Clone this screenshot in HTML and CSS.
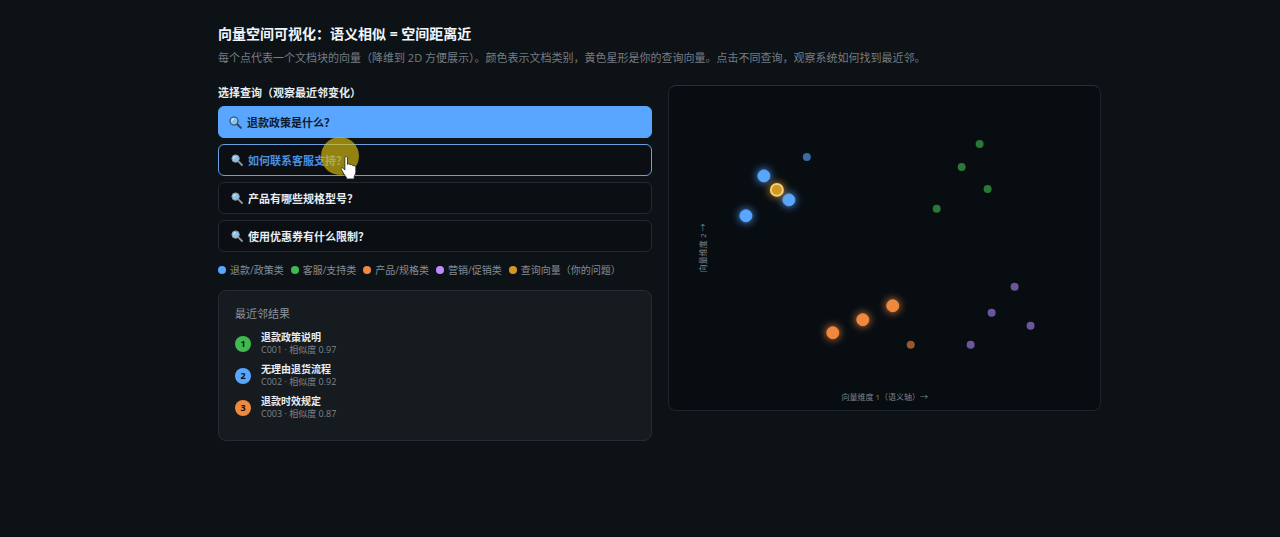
FILE: index.html
```html
<!DOCTYPE html>
<html lang="zh-CN">
<head>
    <meta charset="UTF-8">
    <title>向量空间可视化</title>
    <link rel="stylesheet" href="styles.css">
</head>
<body>
    <svg class="defs" width="0" height="0" aria-hidden="true">
        <symbol id="icon-search" viewBox="0 0 12 12">
            <path d="M7.4 7.4 L11 11" stroke="currentColor" stroke-width="1.8" stroke-linecap="round"/>
            <circle cx="4.6" cy="4.6" r="3.7" fill="#8cc4e8" stroke="currentColor" stroke-width="1"/>
            <path d="M2.6 4.6 A2 2 0 0 1 4.6 2.6" fill="none" stroke="#e8f5fc" stroke-width="1"/>
        </symbol>
    </svg>

    <main class="page">
        <h2 class="title">向量空间可视化：语义相似 = 空间距离近</h2>
        <p class="desc">每个点代表一个文档块的向量（降维到 2D 方便展示）。颜色表示文档类别，黄色星形是你的查询向量。点击不同查询，观察系统如何找到最近邻。</p>

        <div class="columns">
            <section class="left">
                <h3 class="label">选择查询（观察最近邻变化）</h3>
                <div class="queries">
                    <button type="button" class="query active"><svg class="icon"><use href="#icon-search"/></svg>退款政策是什么？</button>
                    <button type="button" class="query hover"><svg class="icon"><use href="#icon-search"/></svg>如何联系客服支持？
                        <span class="pointer">
                            <svg class="hand" viewBox="0 0 16 23">
                                <path d="M4.5 1.5 C4.5 0.2 7 0.2 7 1.5 V8 C7.4 7.2 9.5 7.2 9.7 8.6 C10.3 7.9 12.2 8.2 12.4 9.5 C13 9 15 9.2 15 11 V15 C15 17.5 13.6 18.6 13.4 20 V22 H6 V20.5 C4.6 19 3.6 17.2 2.6 15.4 L1 12.8 C0.4 11.4 2.2 10.8 3 11.8 L4.5 13.5 Z" fill="#fff" stroke="#222" stroke-width="0.8"/>
                            </svg>
                        </span>
                    </button>
                    <button type="button" class="query"><svg class="icon"><use href="#icon-search"/></svg>产品有哪些规格型号？</button>
                    <button type="button" class="query"><svg class="icon"><use href="#icon-search"/></svg>使用优惠券有什么限制？</button>
                </div>

                <div class="legend">
                    <span class="legend-item"><i class="dot blue"></i>退款/政策类</span>
                    <span class="legend-item"><i class="dot green"></i>客服/支持类</span>
                    <span class="legend-item"><i class="dot orange"></i>产品/规格类</span>
                    <span class="legend-item"><i class="dot purple"></i>营销/促销类</span>
                    <span class="legend-item"><i class="dot yellow"></i>查询向量（你的问题）</span>
                </div>

                <div class="results">
                    <h4 class="results-title">最近邻结果</h4>
                    <div class="result">
                        <span class="rank green">1</span>
                        <div>
                            <div class="name">退款政策说明</div>
                            <div class="meta">C001 · 相似度 0.97</div>
                        </div>
                    </div>
                    <div class="result">
                        <span class="rank blue">2</span>
                        <div>
                            <div class="name">无理由退货流程</div>
                            <div class="meta">C002 · 相似度 0.92</div>
                        </div>
                    </div>
                    <div class="result">
                        <span class="rank orange">3</span>
                        <div>
                            <div class="name">退款时效规定</div>
                            <div class="meta">C003 · 相似度 0.87</div>
                        </div>
                    </div>
                </div>
            </section>

            <section class="plot">
                <svg viewBox="0 0 432 324">
                    <!-- 退款 -->
                    <g class="near p-blue">
                        <circle cx="95" cy="90" r="6"/>
                        <circle cx="77" cy="130" r="6"/>
                        <circle cx="120" cy="114" r="6"/>
                    </g>
                    <circle class="far p-blue" cx="138" cy="71" r="4"/>
                    <!-- 客服 -->
                    <g class="far p-green">
                        <circle cx="311" cy="58" r="4"/>
                        <circle cx="293" cy="81" r="4"/>
                        <circle cx="319" cy="103" r="4"/>
                        <circle cx="268" cy="123" r="4"/>
                    </g>
                    <!-- 产品 -->
                    <g class="near p-orange">
                        <circle cx="164" cy="247" r="6"/>
                        <circle cx="194" cy="234" r="6"/>
                        <circle cx="224" cy="220" r="6"/>
                    </g>
                    <circle class="far p-orange" cx="242" cy="259" r="4"/>
                    <!-- 营销 -->
                    <g class="far p-purple">
                        <circle cx="346" cy="201" r="4"/>
                        <circle cx="323" cy="227" r="4"/>
                        <circle cx="362" cy="240" r="4"/>
                        <circle cx="302" cy="259" r="4"/>
                    </g>
                    <!-- 查询向量 -->
                    <circle class="star" cx="108" cy="104" r="6"/>

                    <text class="axis" x="216" y="314" text-anchor="middle">向量维度 1（语义轴）→</text>
                    <text class="axis" transform="translate(37 162) rotate(-90)" text-anchor="middle">向量维度 2 →</text>
                </svg>
            </section>
        </div>
    </main>
</body>
</html>
```
FILE: styles.css
```css
* {
    box-sizing: border-box;
}

body {
    margin: 0;
    background: #0d1216;
    color: #e6edf3;
    font-family: "Open Sans", "Noto Sans CJK SC", sans-serif;
    font-size: 11px;
}

.defs {
    position: absolute;
}

.page {
    padding: 24px 179px 24px 218px;
}

h2, h3, h4, p {
    margin: 0;
}

.title {
    font-size: 14px;
    line-height: 20px;
    color: #f0f6fc;
}

.desc {
    margin-top: 6px;
    line-height: 16px;
    color: #767d84;
}

.columns {
    display: grid;
    grid-template-columns: 1fr 1fr;
    gap: 16px;
    align-items: start;
    margin-top: 19px;
}

.label {
    margin-bottom: 5px;
    font-size: 11px;
    line-height: 16px;
}

.queries {
    display: flex;
    flex-direction: column;
    gap: 6px;
}

.query {
    position: relative;
    display: flex;
    align-items: center;
    gap: 5px;
    height: 32px;
    padding: 0 12px;
    border: 1px solid #242a31;
    border-radius: 6px;
    background: #0b0f14;
    color: #e6edf3;
    font: bold 11px "Open Sans", "Noto Sans CJK SC", sans-serif;
    cursor: pointer;
}

.query.active {
    background: #58a6ff;
    border-color: #58a6ff;
    color: #0d1a2b;
}

.query.hover {
    border-color: #6a9fe0;
    color: #4a90e0;
}

.icon {
    width: 12px;
    height: 12px;
    color: #8f979e;
}

.active .icon {
    width: 13px;
    height: 13px;
    margin-left: -2px;
    color: #2c4563;
}

.pointer {
    position: absolute;
    left: 102px;
    top: -8px;
    width: 38px;
    height: 38px;
    border-radius: 50%;
    background: rgba(220, 190, 15, 0.66);
}

.hand {
    position: absolute;
    left: 19px;
    top: 19px;
    width: 17px;
    height: 24px;
}

.legend {
    display: flex;
    flex-wrap: wrap;
    gap: 7px;
    margin-top: 11px;
    font-size: 10px;
    line-height: 14px;
    color: #858c93;
}

.legend-item {
    display: flex;
    align-items: center;
    gap: 4px;
}

.dot {
    width: 8px;
    height: 8px;
    border-radius: 50%;
}

.blue { background: #58a6ff; }
.green { background: #3fb950; }
.orange { background: #f0883e; }
.purple { background: #bc8cff; }
.yellow { background: #d29922; }

.results {
    margin-top: 13px;
    padding: 16px 16px 20px;
    border: 1px solid #272c32;
    border-radius: 8px;
    background: #161b20;
}

.results-title {
    margin-bottom: 10px;
    font-size: 11px;
    font-weight: normal;
    line-height: 14px;
    color: #8b929a;
}

.result {
    display: flex;
    align-items: center;
    gap: 10px;
}

.result + .result {
    margin-top: 7px;
}

.rank {
    width: 16px;
    height: 16px;
    border-radius: 50%;
    color: #0d1216;
    font-size: 9px;
    font-weight: bold;
    line-height: 16px;
    text-align: center;
}

.name {
    font-size: 10px;
    font-weight: bold;
    line-height: 13px;
}

.meta {
    font-size: 9px;
    line-height: 12px;
    color: #7d848c;
}

.plot {
    border: 1px solid #1f252a;
    border-top-color: #262b52;
    border-radius: 8px;
    background: #080d12;
}

.plot svg {
    display: block;
    width: 100%;
}

.p-blue { fill: #58a6ff; color: #58a6ff; }
.p-green { fill: #3fb950; color: #3fb950; }
.p-orange { fill: #f0883e; color: #f0883e; }
.p-purple { fill: #a882f0; color: #a882f0; }

.near {
    stroke: currentColor;
    stroke-width: 1;
    filter: drop-shadow(0 0 4px currentColor);
}

.far {
    opacity: 0.62;
}

.star {
    fill: #d29922;
    stroke: #f5cf80;
    stroke-width: 2;
    filter: drop-shadow(0 0 4px #d29922);
}

.axis {
    fill: #7d848c;
    font-size: 8px;
}
```
